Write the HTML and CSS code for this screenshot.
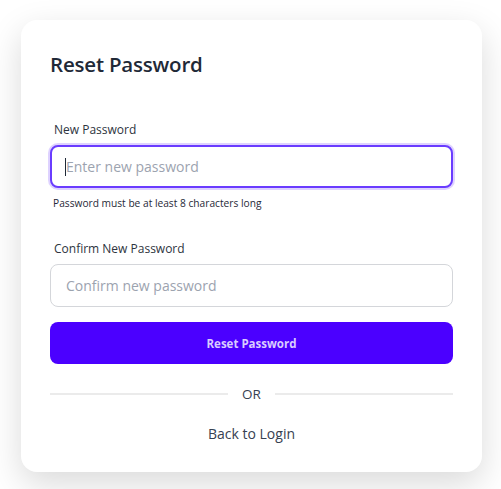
FILE: index.html
```html
<!DOCTYPE html>
<html lang="en">
<head>
<meta charset="utf-8">
<title>Reset Password</title>
<link rel="stylesheet" href="styles.css">
</head>
<body>
<div class="page">
  <form class="card">
    <h1 class="title">Reset Password</h1>
    <label class="label label-first" for="np">New Password</label>
    <div class="field">
      <input id="np" class="input input-focus" type="password" placeholder="Enter new password">
      <span class="caret"></span>
    </div>
    <p class="hint">Password must be at least 8 characters long</p>
    <label class="label label-second" for="cp">Confirm New Password</label>
    <div class="field">
      <input id="cp" class="input" type="password" placeholder="Confirm new password">
    </div>
    <button type="button" class="btn">Reset Password</button>
    <div class="divider"><span class="line"></span><span class="or">OR</span><span class="line"></span></div>
    <a class="back" href="#">Back to Login</a>
  </form>
</div>
</body>
</html>
```
FILE: styles.css
```css
* { box-sizing: border-box; }
html, body { margin: 0; padding: 0; background: #ffffff; }
body {
  font-family: "Open Sans", "Noto Sans", sans-serif;
  color: #374151;
}
.page {
  min-height: 489px;
  padding: 20px 19px 17px 21px;
}
.card {
  width: 461px;
  background: #ffffff;
  border-radius: 16px;
  box-shadow: 0 12px 34px rgba(0, 0, 0, 0.15);
  padding: 29px 29px 28px 29px;
  display: flex;
  flex-direction: column;
}
.title {
  margin: 0;
  font-size: 20.5px;
  line-height: 30px;
  font-weight: 600;
  color: #1f2937;
  letter-spacing: -0.2px;
}
.label {
  font-size: 12px;
  line-height: 18px;
  color: #2d3440;
  padding-left: 4px;
}
.label-first { margin-top: 42px; }
.label-second { margin-top: 29px; }
.field {
  position: relative;
  margin-top: 6px;
}
.input {
  display: block;
  width: 100%;
  height: 43px;
  border: 1px solid #d4d6da;
  border-radius: 8px;
  padding: 0 15px;
  font-family: inherit;
  font-size: 14px;
  color: #1f2937;
  background: #ffffff;
  outline: none;
}
.input::placeholder { color: #9ca3af; }
.input-focus {
  border: 2px solid #6a3cff;
  box-shadow: 0 0 0 2px rgba(124, 77, 255, 0.25);
  padding-left: 14px;
}
.caret {
  position: absolute;
  left: 15px;
  top: 13px;
  width: 1px;
  height: 18px;
  background: #1f2937;
}
.hint {
  margin: 8px 0 0 3px;
  font-size: 10.2px;
  line-height: 15px;
  color: #1f2937;
}
.btn {
  margin-top: 15px;
  height: 42px;
  border: none;
  border-radius: 8px;
  background: #4b00ff;
  color: #d9ccff;
  font-family: inherit;
  font-size: 11.5px;
  font-weight: 700;
  cursor: pointer;
}
.divider {
  margin-top: 20px;
  height: 20px;
  display: flex;
  align-items: center;
  gap: 14px;
}
.line {
  flex: 1;
  height: 2px;
  background: #ebebeb;
}
.or {
  font-size: 13.5px;
  color: #374151;
}
.back {
  margin-top: 20px;
  align-self: center;
  font-size: 14px;
  line-height: 20px;
  color: #374151;
  text-decoration: none;
}
```
